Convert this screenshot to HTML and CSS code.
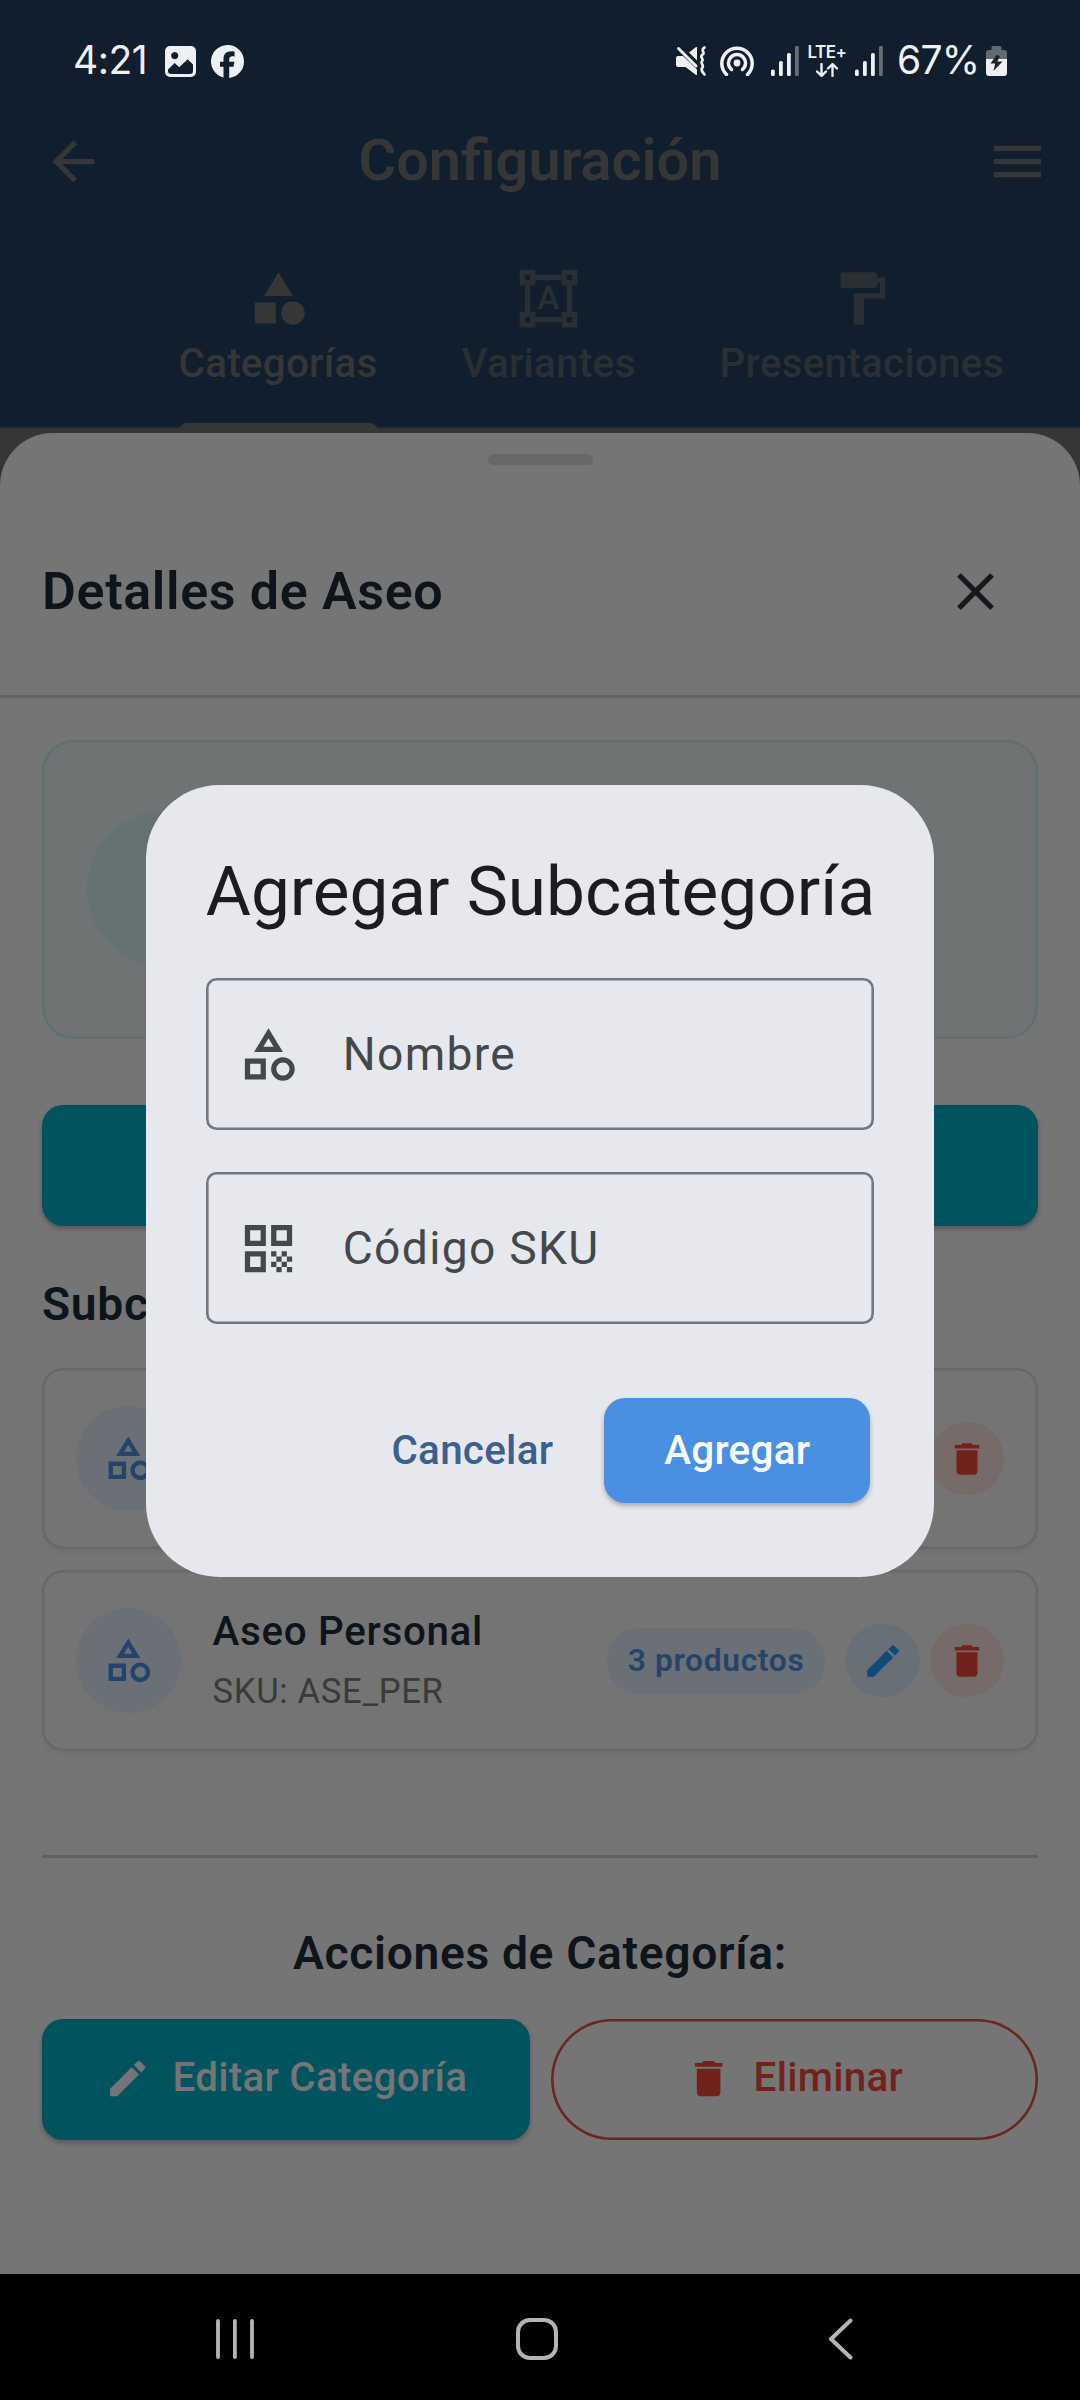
FILE: index.html
```html
<!DOCTYPE html>
<html lang="es">
<head>
<meta charset="utf-8">
<title>Configuración</title>
<link rel="stylesheet" href="styles.css">
</head>
<body>
<svg class="defs" aria-hidden="true">
  <symbol id="i-category" viewBox="0 0 24 24"><path d="M12 2l-5.5 9h11L12 2zm0 3.84L13.93 9h-3.87L12 5.84zM17.5 13c-2.49 0-4.5 2.01-4.5 4.5s2.01 4.5 4.5 4.5 4.5-2.01 4.5-4.5-2.01-4.5-4.5-4.5zm0 7c-1.38 0-2.5-1.12-2.5-2.5s1.12-2.5 2.5-2.5 2.5 1.12 2.5 2.5-1.12 2.5-2.5 2.5zM3 21.5h8v-8H3v8zm2-6h4v4H5v-4z"/></symbol>
  <symbol id="i-edit" viewBox="0 0 24 24"><path d="M3 17.25V21h3.75L17.81 9.94l-3.75-3.75L3 17.25zM20.71 7.04c.39-.39.39-1.02 0-1.41l-2.34-2.34c-.39-.39-1.02-.39-1.41 0l-1.83 1.83 3.75 3.75 1.83-1.83z"/></symbol>
  <symbol id="i-delete" viewBox="0 0 24 24"><path d="M6 19c0 1.1.9 2 2 2h8c1.1 0 2-.9 2-2V7H6v12zM19 4h-3.5l-1-1h-5l-1 1H5v2h14V4z"/></symbol>
  <symbol id="i-signal" viewBox="0 0 28 30"><rect x="0" y="23.5" width="3.8" height="6.5" rx="1.5"/><rect x="8" y="15" width="3.8" height="15" rx="1.5"/><rect x="16" y="7" width="3.8" height="23" rx="1.5"/><rect x="24" y="0" width="3.8" height="30" rx="1.2" opacity=".38"/></symbol>
</svg>
<div class="screen">
  <header class="header">
    <div class="status">
      <span class="clock">4:21</span>
      <svg class="st-gallery" viewBox="0 0 31 31"><path fill-rule="evenodd" d="M5 0h21a5 5 0 0 1 5 5v21a5 5 0 0 1-5 5H5a5 5 0 0 1-5-5V5a5 5 0 0 1 5-5zM9.7 6a3.6 3.6 0 1 0 .01 0zM3 23.500V25a3 3 0 0 0 3 3h19a3 3 0 0 0 3-3v-6.500l-5.300-5.200-8.500 8-4.600-4.200z"/></svg>
      <svg class="st-fb" viewBox="0 0 33 33"><path d="M33 16.500a16.500 16.500 0 1 0-20.500 16V21.800H9v-5h3.500v-2.300c0-5.500 2.500-8.200 7.800-8.200 1 0 2.600.2 3.300.4v4.500h-1.800c-2.600 0-3.600 1-3.600 3.500v2.100h5.200l-.9 5h-4.300V33A16.500 16.500 0 0 0 33 16.500z"/></svg>
      <svg class="st-mute" viewBox="0 0 30 30"><path d="M2 10h5l14 13.500V29h-1L9.500 21H2a2 2 0 0 1-2-2v-7a2 2 0 0 1 2-2zM13 6.500L20 1h1v13.500z"/><path class="line" d="M2.500 2.500L20 20" stroke-width="3"/><path class="line" d="M28.500 1.500c-5 3 1.500 5-2 7.200-3.400 2.200 1.500 4-.3 6.300-2.300 2.300 2 4 .3 6.500-2.500 2.500 0 4.500 2 7" stroke-width="2.700"/></svg>
      <svg class="st-cast" viewBox="0 0 34 31"><circle cx="17" cy="18" r="3.400"/><path class="line" d="M11.500 24.500a8.500 8.500 0 1 1 11 0M6.500 29.500a15.200 15.200 0 1 1 21 0" stroke-width="3.500"/></svg>
      <svg class="st-signal"><use href="#i-signal"/></svg>
      <div class="lte"><span>LTE+</span><svg viewBox="0 0 22 14"><path class="line" d="M5.500 1v11.500M1 8.500l4.500 4.300L10 8.500M16.500 13V1.500M12 5.500l4.500-4.300L21 5.500" stroke-width="2.400"/></svg></div>
      <svg class="st-signal two"><use href="#i-signal"/></svg>
      <span class="percent">67%</span>
      <svg class="st-battery" viewBox="0 0 21 30"><path opacity=".36" d="M5.500 4V1.500A1.500 1.500 0 0 1 7 0h7a1.500 1.500 0 0 1 1.500 1.500V4H18a3 3 0 0 1 3 3v6H0V7a3 3 0 0 1 3-3z"/><path d="M0 13h21v14a3 3 0 0 1-3 3H3a3 3 0 0 1-3-3z"/><path fill="#222" d="M10.500 9L4.500 17.500h4.700L7.500 25l9-9.500h-5.200L14 10z"/></svg>
    </div>
    <div class="appbar">
      <svg class="icon" viewBox="0 0 24 24"><path d="M20 11H7.830l5.590-5.590L12 4l-8 8 8 8 1.410-1.410L7.830 13H20v-2z"/></svg>
      <h1>Configuración</h1>
      <svg class="icon" viewBox="0 0 24 24"><path d="M3 18h18v-2H3v2zm0-5h18v-2H3v2zm0-7v2h18V6H3z"/></svg>
    </div>
    <nav class="tabs">
      <div class="tab active"><svg class="icon" viewBox="0 0 24 24"><path d="M12 2l-5.500 9h11z"/><circle cx="17.500" cy="17.500" r="4.500"/><path d="M3 13.500h8v8H3z"/></svg><span>Categorías</span></div>
      <div class="tab"><svg class="icon" viewBox="0 0 24 24"><path d="M23 7V1h-6v2H7V1H1v6h2v10H1v6h6v-2h10v2h6v-6h-2V7h2zM3 3h2v2H3V3zm2 18H3v-2h2v2zm12-2H7v-2H5V7h2V5h10v2h2v10h-2v2zm4 2h-2v-2h2v2zM19 5V3h2v2h-2zm-5.270 9h-3.490l-.73 2H7.890l3.400-9h1.400l3.410 9h-1.630l-.74-2zm-3.040-1.260h2.610L12 8.910l-1.310 3.830z"/></svg><span>Variantes</span></div>
      <div class="tab"><svg class="icon" viewBox="0 0 24 24"><path d="M18 4V3c0-.55-.45-1-1-1H5c-.55 0-1 .45-1 1v4c0 .55.45 1 1 1h12c.55 0 1-.45 1-1V6h1v4H9v11c0 .55.45 1 1 1h2c.55 0 1-.45 1-1v-9h8V4h-3z"/></svg><span>Presentaciones</span></div>
    </nav>
  </header>
  <main class="sheet">
    <div class="handle"></div>
    <div class="sheet-head">
      <h2>Detalles de Aseo</h2>
      <svg class="icon" viewBox="0 0 24 24"><path d="M19 6.410L17.590 5 12 10.590 6.410 5 5 6.410 10.590 12 5 17.590 6.410 19 12 13.410 17.590 19 19 17.590 13.410 12z"/></svg>
    </div>
    <section class="info"><div class="info-avatar"></div></section>
    <div class="btn add"></div>
    <h3 class="sub-title">Subcategorías</h3>
    <div class="card">
      <div class="avatar"><svg><use href="#i-category"/></svg></div>
      <div class="round del"><svg><use href="#i-delete"/></svg></div>
    </div>
    <div class="card">
      <div class="avatar"><svg><use href="#i-category"/></svg></div>
      <div class="card-text"><b>Aseo Personal</b><span>SKU: ASE_PER</span></div>
      <div class="pill"><span>3 productos</span></div>
      <div class="round edit"><svg><use href="#i-edit"/></svg></div>
      <div class="round del"><svg><use href="#i-delete"/></svg></div>
    </div>
    <hr>
    <h3 class="act-title">Acciones de Categoría:</h3>
    <div class="actions">
      <div class="btn"><svg><use href="#i-edit"/></svg><span>Editar Categoría</span></div>
      <div class="btn outline"><svg><use href="#i-delete"/></svg><span>Eliminar</span></div>
    </div>
  </main>
  <footer class="navbar">
    <svg class="recents" viewBox="0 0 38 40"><path class="line" d="M2 2v36M18.900 2v36M36 2v36" stroke-width="3.800"/></svg>
    <svg class="home" viewBox="0 0 42 42"><rect class="line" x="2" y="2" width="38" height="38" rx="12" stroke-width="4"/></svg>
    <svg class="back" viewBox="0 0 25 42"><path class="line" d="M22.500 2.500L3 21l19.500 18.500" stroke-width="4"/></svg>
  </footer>
  <div class="dialog">
    <h2>Agregar Subcategoría</h2>
    <div class="field"><svg class="icon"><use href="#i-category"/></svg><span>Nombre</span></div>
    <div class="field"><svg class="icon" viewBox="0 0 24 24"><path d="M3 11h8V3H3v8zm2-6h4v4H5V5zM3 21h8v-8H3v8zm2-6h4v4H5v-4zM13 3v8h8V3h-8zm6 6h-4V5h4v4zM19 19h2v2h-2zM13 13h2v2h-2zM15 15h2v2h-2zM13 17h2v2h-2zM15 19h2v2h-2zM17 17h2v2h-2zM17 13h2v2h-2zM19 15h2v2h-2z"/></svg><span>Código SKU</span></div>
    <div class="dialog-actions"><span class="cancel">Cancelar</span><div class="submit">Agregar</div></div>
  </div>
</div>
</body>
</html>
```
FILE: styles.css
```css
* { box-sizing: border-box; margin: 0; padding: 0; }
body { background: #000; font-family: Roboto, "Liberation Sans", sans-serif; }
svg { display: block; flex: none; fill: currentColor; }
.defs { position: absolute; width: 0; height: 0; }
.line { fill: none; stroke: currentColor; stroke-linecap: round; stroke-linejoin: round; }
.icon { width: 63px; height: 63px; }

.screen { position: relative; width: 1080px; height: 2400px; overflow: hidden; background: #363636; display: flex; flex-direction: column; }

/* Header: status bar, app bar, tabs */
.header { height: 429px; flex: none; background: #111e2e; color: #363636; border-bottom: 2px solid #2a2e31; }
.status { height: 120px; padding-left: 73px; display: flex; align-items: flex-start; color: #eef0f3; }
.clock, .percent { font: 400 39px/48px Inter, Roboto, sans-serif; margin-top: 36px; }
.clock { width: 92px; letter-spacing: -.5px; }
.st-gallery { width: 31px; height: 31px; margin-top: 46px; }
.st-fb { width: 33px; height: 33px; margin: 45px 0 0 15px; }
.st-mute { width: 30px; height: 30px; margin: 46px 0 0 432px; }
.st-cast { width: 34px; height: 31px; margin: 45px 0 0 14px; }
.st-signal { width: 28px; height: 30px; margin: 46px 0 0 17px; }
.st-signal.two { margin-left: 9px; }
.lte { width: 38px; margin: 43px 0 0 9px; display: flex; flex-direction: column; align-items: center; }
.lte span { font: 600 17px/18px Inter, Roboto, sans-serif; letter-spacing: -.5px; }
.lte svg { width: 22px; height: 14px; margin-top: 2px; }
.percent { width: 89px; margin-left: 14px; letter-spacing: -.7px; }
.st-battery { width: 21px; height: 30px; margin-top: 46px; }

.appbar { height: 83px; padding: 0 31px 0 42px; display: flex; align-items: center; justify-content: space-between; }
.appbar h1 { font-size: 57.75px; line-height: 68px; font-weight: 600; margin: -4px 0 0 -11px; }
.tabs { height: 226px; padding-left: 178.5px; padding-top: 64px; display: flex; gap: 84px; }
.tab { position: relative; display: flex; flex-direction: column; align-items: center; font-size: 40.4px; line-height: 48px; font-weight: 500; letter-spacing: .26px; color: #2a2f33; }
.tab span { margin-top: 9.5px; }
.tab.active { color: #363636; }
.tab.active::after { content: ""; position: absolute; left: 0; right: 0; bottom: -2px; height: 8px; border-radius: 8px 8px 0 0; background: #363636; }

/* Bottom sheet */
.sheet { margin-top: 4px; height: 1841px; flex: none; background: #757575; border-radius: 52.5px 52.5px 0 0; color: #0e141b; letter-spacing: .656px; }
.handle { width: 105px; height: 10.5px; margin: 0 auto; border-radius: 6px; background: #686868; position: relative; top: 21px; }
.sheet-head { height: 254.5px; padding: 45px 73px 0 42px; border-bottom: 3px solid #626366; display: flex; align-items: center; justify-content: space-between; }
.sheet-head h2 { font-size: 52px; line-height: 62px; font-weight: 600; }
.sheet-head .icon { color: #15191d; }
.info { margin: 42px 42px 0; height: 299px; padding: 0 44.6px; box-shadow: inset 0 0 0 2.6px #5f7071; border-radius: 31.5px; background: #6f7374; display: flex; align-items: center; }
.info-avatar { width: 157.5px; height: 157.5px; border-radius: 50%; background: #657173; }
.btn { height: 121px; border-radius: 21px; background: #00545f; color: #757575; display: flex; align-items: center; justify-content: center; gap: 21px; font-size: 40.4px; font-weight: 500; letter-spacing: .26px; box-shadow: 0 3px 5px rgba(0,0,0,.24); }
.btn svg { width: 47.25px; height: 47.25px; }
.btn span { margin-top: -3px; }
.btn.add { margin: 66px 42px 0; }
.sub-title { margin: 51px 42px 0; height: 91px; font-size: 46.2px; line-height: 54px; font-weight: 600; }
.card { margin: 0 42px 21px; height: 181px; padding: 0 34.1px; border-radius: 21px; background: #747474; display: flex; align-items: center; box-shadow: inset 0 0 0 2.6px #686868, 0 3px 6px rgba(0,0,0,.05); }
.avatar { width: 105px; height: 105px; border-radius: 50%; background: #6b7077; color: #24446a; display: grid; place-items: center; }
.avatar svg { width: 52.5px; height: 52.5px; }
.card-text { margin: 3px 0 0 31.5px; display: flex; flex-direction: column; }
.card-text b { font-size: 40.4px; line-height: 58px; font-weight: 500; }
.card-text span { font-size: 34.65px; line-height: 60px; color: #3a3a3a; }
.pill { margin-left: auto; height: 66px; padding: 0 21px; border-radius: 31.5px; background: #6b7076; color: #24446a; font-size: 31.76px; font-weight: 600; display: flex; align-items: center; }
.round { width: 73.5px; height: 73.5px; border-radius: 50%; display: grid; place-items: center; }
.round svg { width: 42px; height: 42px; }
.round.edit { margin-left: 21px; background: #696f76; color: #114a78; }
.round.del { margin-left: 10.5px; background: #766b69; color: #72221b; }
.avatar + .round.del { margin-left: auto; }
.sheet hr { margin: 104px 42px 0; border: 0; height: 2.6px; background: #606161; }
.act-title { margin-top: 68.4px; height: 92.6px; font-size: 46.2px; line-height: 54px; font-weight: 600; text-align: center; }
.actions { padding: 0 42px; display: grid; grid-template-columns: 1fr 1fr; gap: 21px; }
.btn.outline { border-radius: 61px; background: none; color: #72221b; box-shadow: inset 0 0 0 2.6px #6c2620; }

/* System navigation */
.navbar { height: 126px; flex: none; background: #000; color: #b4b4b4; padding-left: 216px; display: flex; align-items: center; }
.navbar svg { margin-top: 4px; }
.recents { width: 38px; height: 40px; }
.home { width: 42px; height: 42px; margin-left: 262px; }
.back { width: 25px; height: 42px; margin-left: 270px; }

/* Dialog */
.dialog { position: absolute; left: 146.25px; top: 785px; width: 787.5px; height: 791.5px; padding: 63px 59.5px 0; border-radius: 73.5px; background: #e6e8ed; color: #1a1c20; }
.dialog h2 { font-size: 69.3px; line-height: 84px; font-weight: 400; white-space: nowrap; height: 128px; margin-top: 2px; }
.field { height: 152px; margin-bottom: 42px; box-shadow: inset 0 0 0 2.6px #72787f; border-radius: 10.5px; padding-left: 31.5px; display: flex; align-items: center; color: #43484d; font-size: 46.2px; letter-spacing: 1.31px; }
.field span { margin-left: 42.5px; }
.dialog-actions { margin: 74px 4px 0 0; height: 105px; display: flex; align-items: center; justify-content: flex-end; font-size: 40.4px; font-weight: 500; letter-spacing: .26px; }
.cancel { color: #3b608f; margin-right: 51px; }
.submit { width: 266px; height: 105px; border-radius: 21px; background: #4a90e2; color: #fff; display: grid; place-items: center; box-shadow: 0 3px 5px rgba(0,0,0,.26); }
```
